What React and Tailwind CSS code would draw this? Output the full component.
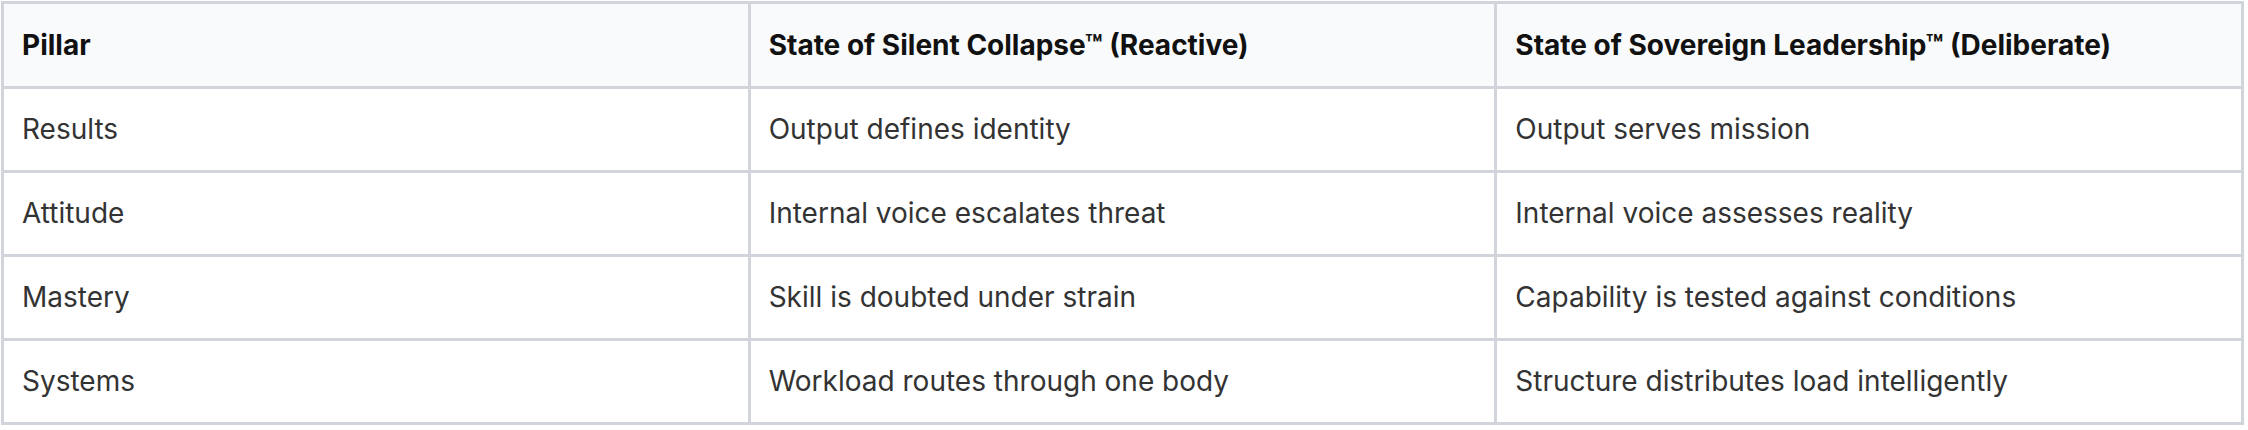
export default function App() {
  const rows = [
    ["Results", "Output defines identity", "Output serves mission"],
    ["Attitude", "Internal voice escalates threat", "Internal voice assesses reality"],
    ["Mastery", "Skill is doubted under strain", "Capability is tested against conditions"],
    ["Systems", "Workload routes through one body", "Structure distributes load intelligently"],
  ];
  const headers = [
    "Pillar",
    "State of Silent Collapse\u2122 (Reactive)",
    "State of Sovereign Leadership\u2122 (Deliberate)",
  ];
  return (
    <div className="bg-white p-[1px]" style={{ fontFamily: "Inter, 'Noto Sans', sans-serif" }}>
      <table className="w-[2243px] table-fixed border-collapse border-[3px] border-[#d1d5db] text-[28px] leading-[42px]">
        <thead>
          <tr className="bg-[#f9fafb]">
            {headers.map((h) => (
              <th
                key={h}
                className="border-[3px] border-[#d1d5db] px-[18px] pt-[20px] pb-[20px] text-left font-bold text-[#111111]"
              >
                {h}
              </th>
            ))}
          </tr>
        </thead>
        <tbody>
          {rows.map((r) => (
            <tr key={r[0]}>
              {r.map((c, i) => (
                <td
                  key={i}
                  className="border-[3px] border-[#d1d5db] px-[18px] pt-[19px] pb-[20px] text-left text-[#333333]"
                >
                  {c}
                </td>
              ))}
            </tr>
          ))}
        </tbody>
      </table>
    </div>
  );
}
